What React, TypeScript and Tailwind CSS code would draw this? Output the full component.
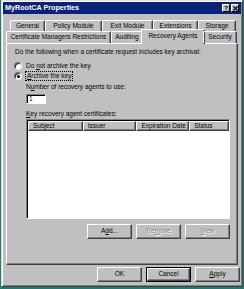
import type { ReactNode } from "react";

const TOP_TABS = [
  { label: "General", w: "w-[35px]" },
  { label: "Policy Module", w: "w-[57px]" },
  { label: "Exit Module", w: "w-[51px]" },
  { label: "Extensions", w: "w-[45px]" },
  { label: "Storage", w: "w-[38px]" },
];

const COLUMNS = [
  { label: "Subject", w: "w-[55px]" },
  { label: "Issuer", w: "w-[54px]" },
  { label: "Expiration Date", w: "w-[53px]" },
  { label: "Status", w: "w-[40px]" },
];

function Radio({ checked }: { checked?: boolean }) {
  return (
    <div className="w-[8px] h-[8px] shrink-0 rounded-full bg-white border border-t-[#707070] border-l-[#707070] border-r-[#e8e8e8] border-b-[#e8e8e8] shadow-[inset_1px_1px_0_#202020] flex items-center justify-center">
      {checked && <div className="w-[3px] h-[3px] rounded-full bg-black" />}
    </div>
  );
}

function Button({
  children,
  disabled,
  isDefault,
}: {
  children: ReactNode;
  disabled?: boolean;
  isDefault?: boolean;
}) {
  return (
    <div
      className={
        isDefault
          ? "w-[45px] h-[15px] border border-black"
          : "w-[45px] h-[15px]"
      }
    >
      <div
        className={
          "w-full h-full flex items-center justify-center border border-t-white border-l-white border-r-[#404040] border-b-[#404040] shadow-[inset_-1px_-1px_0_#808080] bg-[#c0c0c0] " +
          (disabled ? "text-[#8a8a8a] [text-shadow:1px_1px_0_#ffffff]" : "text-black")
        }
      >
        {children}
      </div>
    </div>
  );
}

export default function App() {
  return (
    <div className="w-[244px] h-[289px] bg-[#1b7d75] overflow-hidden font-['Liberation_Sans',Arial,sans-serif] text-[6.5px] leading-none text-black">
      {/* window */}
      <div className="ml-[1px] w-[242px] h-[287px] bg-[#c0c0c0] border border-t-[#dfdfdf] border-l-[#dfdfdf] border-r-[#404040] border-b-[#404040] p-[1px] shadow-[inset_1px_1px_0_#ffffff,inset_-1px_-1px_0_#808080]">
        {/* title bar */}
        <div className="h-[12px] bg-[#0b217a] flex items-center justify-between pl-[2px] pr-[2px]">
          <span className="text-white font-bold text-[7.2px]">MyRootCA Properties</span>
          <div className="flex">
            <div className="w-[8px] h-[8px] bg-[#c0c0c0] border border-t-white border-l-white border-r-black border-b-black flex items-center justify-center font-bold text-[6px]">
              ?
            </div>
            <div className="ml-[1px] w-[8px] h-[8px] bg-[#c0c0c0] border border-t-white border-l-white border-r-black border-b-black flex items-center justify-center">
              <svg width="5" height="5" viewBox="0 0 5 5">
                <path d="M0.5 0.5 L4.5 4.5 M4.5 0.5 L0.5 4.5" stroke="#000" strokeWidth="1.1" />
              </svg>
            </div>
          </div>
        </div>

        {/* back tab row */}
        <div className="mt-[6px] ml-[7px] flex h-[11px]">
          {TOP_TABS.map((t) => (
            <div
              key={t.label}
              className={
                t.w +
                " h-full flex items-center justify-center border-t border-l border-r border-t-white border-l-white border-r-[#404040] rounded-t-[2px] shadow-[inset_-1px_0_0_#808080]"
              }
            >
              {t.label}
            </div>
          ))}
        </div>

        {/* front tab row */}
        <div className="ml-[3px] flex items-end h-[12px] relative z-10">
          <div className="w-[105px] h-full flex items-center justify-center border-t border-l border-r border-t-white border-l-white border-r-[#404040] rounded-t-[2px] shadow-[inset_-1px_0_0_#808080]">
            Certificate Managers Restrictions
          </div>
          <div className="w-[32px] h-full flex items-center justify-center border-t border-l border-r border-t-white border-l-white border-r-[#404040] rounded-t-[2px] shadow-[inset_-1px_0_0_#808080]">
            Auditing
          </div>
          <div className="w-[64px] -mx-[2px] h-[15px] -mb-[1px] bg-[#c0c0c0] flex items-center justify-center pb-[1px] border-t border-l border-r border-t-white border-l-white border-r-[#404040] rounded-t-[2px] shadow-[inset_-1px_0_0_#808080]">
            Recovery Agents
          </div>
          <div className="w-[34px] h-full flex items-center justify-center border-t border-l border-r border-t-white border-l-white border-r-[#404040] rounded-t-[2px] shadow-[inset_-1px_0_0_#808080]">
            Security
          </div>
        </div>

        {/* tab panel */}
        <div className="ml-[3px] w-[232px] h-[222px] border border-t-white border-l-white border-r-[#404040] border-b-[#404040] shadow-[inset_-1px_-1px_0_#808080]">
          <div className="mt-[4px] ml-[8px] h-[8px] flex items-center">
            Do the following when a certificate request includes key archival:
          </div>

          <div className="mt-[6px] ml-[7px] h-[8px] flex items-center gap-[4px]">
            <Radio />
            <span>
              Do <u>n</u>ot archive the key
            </span>
          </div>
          <div className="mt-[2px] ml-[7px] h-[8px] flex items-center gap-[3px]">
            <Radio checked />
            <span className="border border-dotted border-black px-[1px] py-[0.5px]">
              <u>A</u>rchive the key
            </span>
          </div>

          <div className="mt-[3px] ml-[19px] h-[8px] flex items-center">
            <span>
              N<u>u</u>mber of recovery agents to use:
            </span>
          </div>
          <div className="mt-[3px] ml-[19px] w-[20px] h-[10px] bg-white border border-t-[#808080] border-l-[#808080] border-r-white border-b-white shadow-[inset_1px_1px_0_#000000] flex items-center pl-[2px]">
            1
          </div>

          <div className="mt-[6px] ml-[19px] h-[8px] flex items-center">
            <span>
              <u>K</u>ey recovery agent certificates:
            </span>
          </div>

          <div className="mt-[1px] ml-[19px] w-[204px] h-[100px] bg-white border border-t-[#808080] border-l-[#808080] border-r-white border-b-white shadow-[inset_1px_1px_0_#000000] pt-[1px] pl-[1px]">
            <div className="flex h-[10px]">
              {COLUMNS.map((c) => (
                <div
                  key={c.label}
                  className={
                    c.w +
                    " h-full bg-[#c0c0c0] flex items-center pl-[4px] border border-t-white border-l-white border-r-[#404040] border-b-[#404040] shadow-[inset_-1px_-1px_0_#808080]"
                  }
                >
                  {c.label}
                </div>
              ))}
            </div>
          </div>

          <div className="mt-[5px] ml-[19px] w-[204px] flex justify-end gap-[4px]">
            <Button>
              A<u>d</u>d...
            </Button>
            <Button disabled>
              Re<u>m</u>ove
            </Button>
            <Button disabled>
              <u>V</u>iew
            </Button>
          </div>
        </div>

        {/* dialog buttons */}
        <div className="mt-[2px] flex justify-end gap-[4px] pr-[1px]">
          <Button>OK</Button>
          <Button isDefault>Cancel</Button>
          <Button>
            <u>A</u>pply
          </Button>
        </div>
      </div>
    </div>
  );
}
